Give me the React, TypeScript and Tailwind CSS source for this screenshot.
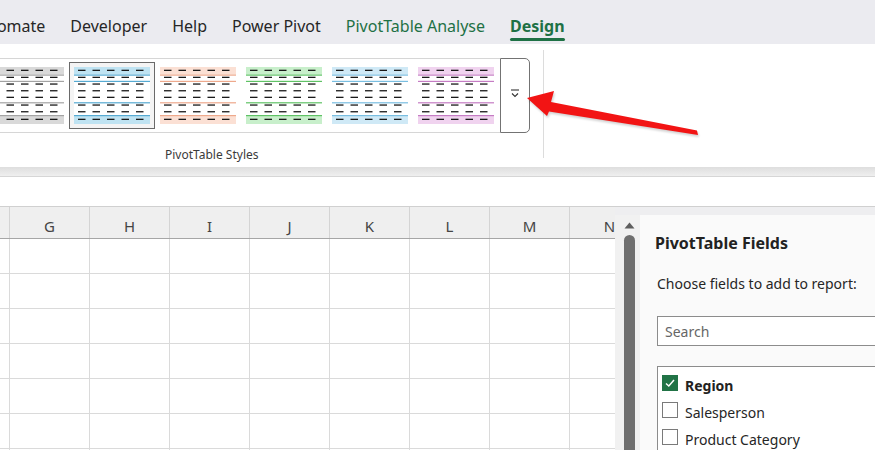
import React from "react";

type Sw = { band: string; line: string };

function Swatch({ band, line }: Sw) {
  const rows = [3.3, 10.3, 17, 23.7, 30.3, 38, 44.7, 52.3];
  const xs = [4, 18.5, 33, 47.5, 62];
  return (
    <svg width="76" height="57" viewBox="0 0 76 57" className="block">
      <rect x="0" y="0" width="76" height="57" fill="#ffffff" />
      <rect x="0" y="0" width="76" height="7.5" fill={band} />
      <rect x="0" y="48" width="76" height="9" fill={band} />
      <rect x="0" y="7.5" width="76" height="1.2" fill={line} />
      <rect x="0" y="13.8" width="76" height="1.2" fill={line} />
      <rect x="0" y="35.2" width="76" height="1.2" fill={line} />
      <rect x="0" y="48" width="76" height="1.2" fill={line} />
      {rows.map((y, i) =>
        xs.map((x, j) => (
          <rect key={`${i}-${j}`} x={x} y={y - 0.6} width="7.5" height="1.3" fill="#1a1a1a" />
        ))
      )}
    </svg>
  );
}

const swatches: (Sw & { sel?: boolean })[] = [
  { band: "#d9d9d9", line: "#a3a3a3" },
  { band: "#bfe3f2", line: "#56aad2", sel: true },
  { band: "#fbe0d4", line: "#eea98c" },
  { band: "#c8efcb", line: "#5fc265" },
  { band: "#cfe9f6", line: "#79bee1" },
  { band: "#f0d3ef", line: "#c57cc4" },
];

const cols = ["", "G", "H", "I", "J", "K", "L", "M", "N"];

export default function App() {
  return (
    <div
      className="relative w-[875px] h-[450px] overflow-hidden bg-white text-[#262626]"
      style={{ fontFamily: '"Noto Sans", "Open Sans", sans-serif' }}
    >
      {/* Tab bar */}
      <div className="h-[44px] bg-[#ebebf0] overflow-hidden">
        <div className="flex items-start gap-[25px] ml-[-29px] pt-[14px] text-[16px] leading-[24px] whitespace-nowrap">
          <span>Automate</span>
          <span>Developer</span>
          <span>Help</span>
          <span>Power Pivot</span>
          <span className="text-[#1e7145]">PivotTable Analyse</span>
          <span className="flex flex-col text-[#1e7145] font-bold">
            <span>Design</span>
            <span className="h-[3px] mt-0 rounded-full bg-[#1e7145]" />
          </span>
        </div>
      </div>

      {/* Ribbon */}
      <div className="h-[123px] bg-white flex">
        <div className="w-[543px] flex flex-col">
          <div className="flex mt-[14px] h-[75px]">
            <div className="w-[500px] border-y border-[#d6d6d6] overflow-hidden flex items-center">
              <div className="flex ml-[-17px]">
                {swatches.map((s, i) => (
                  <div key={i} className="w-[86px] h-[67px] flex items-center justify-center shrink-0">
                    <div
                      className={
                        s.sel
                          ? "w-[86px] h-[67px] border border-[#6a6a6a] bg-[#f4f4f4] flex items-center justify-center"
                          : "flex items-center justify-center"
                      }
                    >
                      <Swatch band={s.band} line={s.line} />
                    </div>
                  </div>
                ))}
              </div>
            </div>
            <div className="w-[30px] border border-[#737373] rounded-r-[5px] flex items-center justify-center">
              <svg width="10" height="10" viewBox="0 0 10 10" className="mt-[-3px]">
                <line x1="1" y1="1" x2="9" y2="1" stroke="#333" strokeWidth="1.1" />
                <polyline points="2,4.5 5,7.5 8,4.5" fill="none" stroke="#333" strokeWidth="1.1" />
              </svg>
            </div>
          </div>
          <div className="pl-[165px] mt-[14px] text-[12px] leading-[16px] text-[#3b3b3b] whitespace-nowrap">
            PivotTable Styles
          </div>
        </div>
        <div className="w-px h-[108px] mt-[6px] bg-[#dcdcdc]" />
      </div>

      {/* Ribbon shadow */}
      <div className="h-[10px] bg-gradient-to-b from-[#dedede] to-[#efefef] border-b border-[#d6d6d6]" />
      {/* Formula bar */}
      <div className="h-[30px] bg-white border-b border-[#d0d0d0]" />

      {/* Sheet */}
      <div className="flex h-[243px] bg-[#eeeef0]">
        <div className="w-[615px] overflow-hidden">
          <div className="flex ml-[-70px] h-[32px] bg-[#efefef] border-b border-[#a6a6a6]">
            {cols.map((c, i) => (
              <div
                key={i}
                className="w-[80px] shrink-0 border-r border-[#d4d4d4] flex items-end justify-center pb-[1px] text-[15px] leading-[22px] text-[#444]"
              >
                {c}
              </div>
            ))}
          </div>
          {Array.from({ length: 7 }).map((_, r) => (
            <div key={r} className="flex ml-[-70px] h-[35px] bg-white border-b border-[#dadada]">
              {cols.map((_c, i) => (
                <div key={i} className="w-[80px] shrink-0 border-r border-[#dadada]" />
              ))}
            </div>
          ))}
        </div>

        {/* scrollbar */}
        <div className="w-[25px] mt-[8px] bg-[#f1f1f1] flex flex-col items-center">
          <svg width="11" height="7" viewBox="0 0 11 7" className="mt-[7px] ml-[3px]">
            <polygon points="5.5,0.5 10.5,6.5 0.5,6.5" fill="#5e5e5e" />
          </svg>
          <div className="w-[11px] flex-1 mt-[6px] ml-[3px] rounded-t-full bg-[#6f6f6f]" />
        </div>

        {/* Pivot panel */}
        <div className="flex-1 mt-[8px] bg-[#fafafa] pl-[15px] overflow-hidden whitespace-nowrap">
          <div className="mt-[16px] text-[16px] leading-[24px] font-bold text-[#222]">PivotTable Fields</div>
          <div className="mt-[19px] ml-[2px] text-[14px] leading-[20px] text-[#262626]">
            Choose fields to add to report:
          </div>
          <div className="mt-[22px] ml-[2px] h-[30px] w-[240px] border border-[#8c8c8c] bg-white pl-[7px] text-[14px] leading-[30px] text-[#666]">
            Search
          </div>
          <div className="mt-[20px] ml-[2px] w-[240px] h-[100px] border-t border-l border-[#8c8c8c] bg-white pt-[8px] pl-[4px]">
            <div className="flex items-start h-[17px] gap-[7px]">
              <div className="w-[16px] h-[16px] bg-[#217346] flex items-center justify-center">
                <svg width="12" height="12" viewBox="0 0 12 12">
                  <polyline points="2,6.5 4.8,9 10,3" fill="none" stroke="#fff" strokeWidth="1.5" />
                </svg>
              </div>
              <span className="mt-[1px] text-[14px] font-bold leading-[20px] text-[#222]">Region</span>
            </div>
            <div className="flex items-start h-[17px] gap-[7px] mt-[10px]">
              <div className="w-[16px] h-[16px] border border-[#7a7a7a] bg-white" />
              <span className="mt-[1px] text-[14px] leading-[20px] text-[#262626]">Salesperson</span>
            </div>
            <div className="flex items-start h-[17px] gap-[7px] mt-[10px]">
              <div className="w-[16px] h-[16px] border border-[#7a7a7a] bg-white" />
              <span className="mt-[1px] text-[14px] leading-[20px] text-[#262626]">Product Category</span>
            </div>
          </div>
        </div>
      </div>

      {/* Red arrow overlay */}
      <svg className="absolute left-0 top-0 pointer-events-none" width="875" height="450" viewBox="0 0 875 450">
        <defs>
          <filter id="sh" x="-10%" y="-50%" width="120%" height="200%">
            <feGaussianBlur stdDeviation="1.2" />
          </filter>
        </defs>
        <polygon
          points="527,98 554,91 551,102 697,130.5 698,135 549,111.5 547,116"
          fill="#000"
          opacity="0.18"
          filter="url(#sh)"
          transform="translate(1,2)"
        />
        <polygon points="527,98 554,91 551,102 697,130.5 698,135 549,111.5 547,116" fill="#f21414" />
      </svg>
    </div>
  );
}
